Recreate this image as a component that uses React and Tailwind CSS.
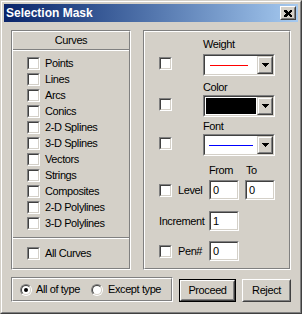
import React from "react";

const Check = () => (
  <div className="w-[13px] h-[13px] shrink-0 border border-t-[#808080] border-l-[#808080] border-b-white border-r-white">
    <div className="w-full h-full border border-t-[#404040] border-l-[#404040] border-b-[#d4d0c8] border-r-[#d4d0c8] bg-white" />
  </div>
);

const Sunken = ({ className = "", children }) => (
  <div className={`shrink-0 border border-t-[#808080] border-l-[#808080] border-b-white border-r-white ${className}`}>
    <div className="w-full h-full border border-t-[#404040] border-l-[#404040] border-b-[#d4d0c8] border-r-[#d4d0c8] bg-white flex">
      {children}
    </div>
  </div>
);

const Etched = ({ className = "", children, inner = "" }) => (
  <div className={`shrink-0 border border-t-[#808080] border-l-[#808080] border-b-white border-r-white ${className}`}>
    <div className={`w-full h-full border border-t-white border-l-white border-b-[#808080] border-r-[#808080] ${inner}`}>
      {children}
    </div>
  </div>
);

const Sep = () => <div className="h-[2px] border-t border-t-[#808080] border-b border-b-white" />;

const Arrow = () => (
  <svg width="7" height="4" viewBox="0 0 7 4" shapeRendering="crispEdges">
    <rect x="0" y="0" width="7" height="1" fill="#000" />
    <rect x="1" y="1" width="5" height="1" fill="#000" />
    <rect x="2" y="2" width="3" height="1" fill="#000" />
    <rect x="3" y="3" width="1" height="1" fill="#000" />
  </svg>
);

const DropBtn = () => (
  <div className="w-[16px] h-full shrink-0 border border-t-[#d4d0c8] border-l-[#d4d0c8] border-b-[#404040] border-r-[#404040]">
    <div className="w-full h-full border border-t-white border-l-white border-b-[#808080] border-r-[#808080] bg-[#d4d0c8] flex items-center justify-center">
      <Arrow />
    </div>
  </div>
);

const Combo = ({ children }) => (
  <Sunken className="w-[72px] h-[22px]">
    <div className="flex-1 flex items-center">{children}</div>
    <DropBtn />
  </Sunken>
);

const Radio = ({ checked }) => (
  <div className="w-[12px] h-[12px] shrink-0 rounded-full border border-t-[#808080] border-l-[#808080] border-b-white border-r-white">
    <div className="w-full h-full rounded-full border border-t-[#404040] border-l-[#404040] border-b-[#d4d0c8] border-r-[#d4d0c8] bg-white flex items-center justify-center">
      {checked && <div className="w-[4px] h-[4px] rounded-full bg-black" />}
    </div>
  </div>
);

const Button = ({ children, w, def }) => (
  <div className={`${w} h-[23px] shrink-0 ${def ? "border border-black" : ""}`}>
    <div className="w-full h-full border border-t-white border-l-white border-b-[#404040] border-r-[#404040]">
      <div className="w-full h-full border border-t-[#d4d0c8] border-l-[#d4d0c8] border-b-[#808080] border-r-[#808080] bg-[#d4d0c8] flex items-center justify-center">
        {children}
      </div>
    </div>
  </div>
);

const Field = ({ value }) => (
  <Sunken className="w-[30px] h-[20px]">
    <div className="pl-[2px] flex items-center">{value}</div>
  </Sunken>
);

const items = [
  "Points",
  "Lines",
  "Arcs",
  "Conics",
  "2-D Splines",
  "3-D Splines",
  "Vectors",
  "Strings",
  "Composites",
  "2-D Polylines",
  "3-D Polylines",
];

export default function App() {
  return (
    <div className="w-[302px] h-[314px] bg-[#d4d0c8] border border-t-[#d4d0c8] border-l-[#d4d0c8] border-b-[#404040] border-r-[#404040] font-['Liberation_Sans',Arial,sans-serif] text-[11px] leading-[13px] text-black tracking-[-0.4px]">
      <div className="h-full border border-t-white border-l-white border-b-[#808080] border-r-[#808080] p-[2px] flex flex-col">
        <div className="h-[18px] shrink-0 flex items-center justify-between bg-linear-to-r from-[#0a246a] to-[#a6caf0] pl-[2px] pr-[2px]">
          <span className="text-white font-bold text-[12px] leading-[14px] tracking-[0px]">Selection Mask</span>
          <div className="w-[16px] h-[14px] border border-t-white border-l-white border-b-[#404040] border-r-[#404040]">
            <div className="w-full h-full border border-t-[#d4d0c8] border-l-[#d4d0c8] border-b-[#808080] border-r-[#808080] bg-[#d4d0c8] flex items-center justify-center">
              <svg width="8" height="7" viewBox="0 0 8 7" shapeRendering="crispEdges">
                <path d="M0 0h2l2 2 2-2h2v1l-2 2.5 2 2.5v1h-2l-2-2-2 2h-2v-1l2-2.5-2-2.5z" fill="#000" />
              </svg>
            </div>
          </div>
        </div>
        <div className="pt-[8px] pl-[7px]">
          <div className="flex gap-[12px]">
            <Etched className="w-[120px] h-[240px]" inner="flex flex-col">
              <div className="h-[17px] flex items-center justify-center">Curves</div>
              <Sep />
              <div className="pt-[4px] pl-[14px]">
                {items.map((t) => (
                  <div key={t} className="h-[16px] flex items-center gap-[5px]">
                    <Check />
                    <span>{t}</span>
                  </div>
                ))}
              </div>
              <div className="mt-[6px]">
                <Sep />
              </div>
              <div className="pt-[6px] pl-[14px]">
                <div className="h-[16px] flex items-center gap-[5px]">
                  <Check />
                  <span>All Curves</span>
                </div>
              </div>
            </Etched>
            <Etched className="w-[148px] h-[240px]" inner="flex flex-col">
              <div className="mt-[6px] ml-[58px]">Weight</div>
              <div className="mt-[3px] flex">
                <div className="ml-[14px] mt-[3px]"><Check /></div>
                <div className="ml-[31px]">
                  <Combo>
                    <div className="ml-[5px] w-[38px] h-[1px] bg-[#ff0000]" />
                  </Combo>
                </div>
              </div>
              <div className="mt-[5px] ml-[58px]">Color</div>
              <div className="mt-[1px] flex">
                <div className="ml-[14px] mt-[3px]"><Check /></div>
                <div className="ml-[31px]">
                  <Combo>
                    <div className="m-[1px] self-stretch flex-1 bg-black" />
                  </Combo>
                </div>
              </div>
              <div className="mt-[3px] ml-[58px]">Font</div>
              <div className="mt-[1px] flex">
                <div className="ml-[14px] mt-[3px]"><Check /></div>
                <div className="ml-[31px]">
                  <Combo>
                    <div className="ml-[4px] w-[44px] h-[1px] bg-[#0000ff]" />
                  </Combo>
                </div>
              </div>
              <div className="mt-[8px] flex">
                <div className="ml-[64px] w-[37px]">From</div>
                <div>To</div>
              </div>
              <div className="mt-[3px] flex items-center">
                <div className="ml-[14px]"><Check /></div>
                <div className="w-[37px] pl-[6px]">Level</div>
                <Field value="0" />
                <div className="ml-[6px]"><Field value="0" /></div>
              </div>
              <div className="mt-[11px] flex items-center">
                <div className="ml-[14px] w-[50px]">Increment</div>
                <Field value="1" />
              </div>
              <div className="mt-[10px] flex items-center">
                <div className="ml-[14px]"><Check /></div>
                <div className="w-[37px] pl-[6px]">Pen#</div>
                <Field value="0" />
              </div>
            </Etched>
          </div>
          <div className="mt-[7px] flex items-start">
            <Etched className="w-[162px] h-[25px]" inner="flex items-center pl-[7px]">
              <div className="w-[71px] flex items-center gap-[4px]">
                <Radio checked />
                <span>All of type</span>
              </div>
              <div className="flex items-center gap-[5px]">
                <Radio />
                <span>Except type</span>
              </div>
            </Etched>
            <div className="ml-[6px] mt-[2px] flex gap-[6px]">
              <Button w="w-[57px]" def>Proceed</Button>
              <Button w="w-[49px]">Reject</Button>
            </div>
          </div>
        </div>
      </div>
    </div>
  );
}
